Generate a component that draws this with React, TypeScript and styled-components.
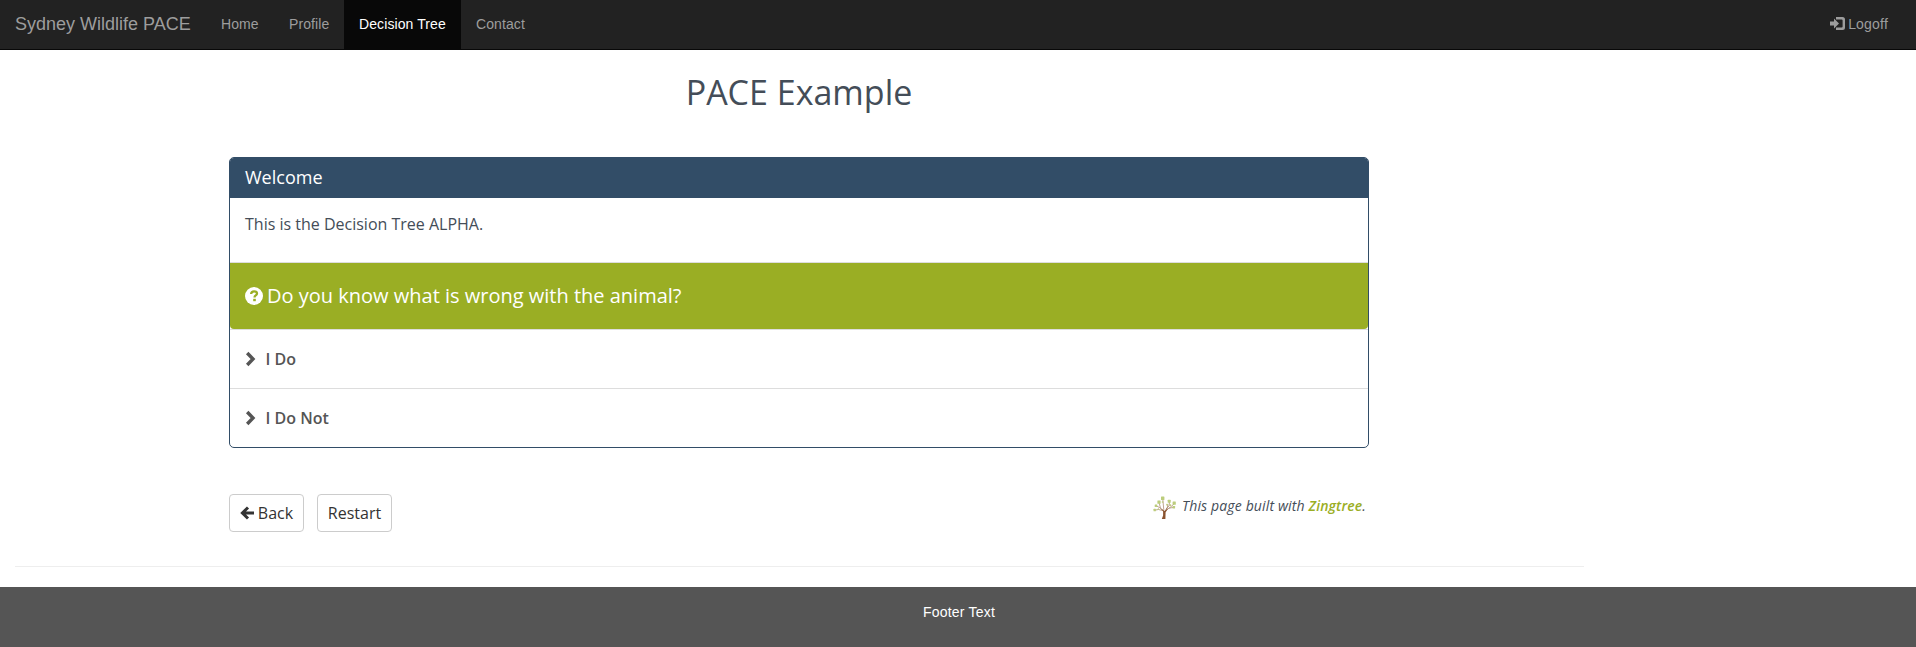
import React from "react";
import styled, { createGlobalStyle } from "styled-components";

const GlobalStyle = createGlobalStyle`
  * { box-sizing: border-box; }
  body {
    margin: 0;
    background: #fff;
    color: #444d58;
    font-family: "Open Sans", sans-serif;
    font-size: 16px;
    overflow-x: hidden;
  }
  h1, h3, p { margin: 0; font-weight: 400; }
`;

const Page = styled.div`
  min-height: 647px;
  display: flex;
  flex-direction: column;
`;

const NavBar = styled.nav`
  display: flex;
  height: 50px;
  background: #222;
  border-bottom: 1px solid #080808;
  font-family: "Liberation Sans", Arial, sans-serif;
  font-size: 14px;
  line-height: 20px;
  color: #9d9d9d;
`;

const Brand = styled.a`
  padding: 14px 15px;
  font-size: 18px;
  width: 206px;
  white-space: nowrap;
`;

const NavLink = styled.a<{ $active?: boolean; $width?: number }>`
  display: flex;
  padding: 14px 0 15px 15px;
  width: ${(p) => (p.$width ? `${p.$width}px` : "auto")};
  white-space: nowrap;
  letter-spacing: 0.1px;
  color: ${(p) => (p.$active ? "#fff" : "#9d9d9d")};
  background: ${(p) => (p.$active ? "#080808" : "transparent")};
`;

const Logoff = styled.a`
  display: flex;
  gap: 3px;
  margin-left: auto;
  padding: 14px 28px 15px 0;
  letter-spacing: 0.2px;
  svg { margin-top: 3px; }
`;

const Main = styled.main`
  width: 1140px;
  margin-left: 229px;
  height: 516px;
`;

const Title = styled.h1`
  height: 107px;
  padding-top: 18px;
  font-size: 34px;
  line-height: 48px;
  text-align: center;
`;

const Panel = styled.section`
  height: 291px;
  border: 1px solid #324d67;
  border-radius: 5px;
  overflow: hidden;
`;

const PanelHeading = styled.h3`
  height: 40px;
  padding: 7px 15px;
  background: #324d67;
  color: #fff;
  font-size: 18px;
  line-height: 24px;
`;

const PanelBody = styled.p`
  height: 64px;
  padding: 14px 15px;
  line-height: 24px;
`;

const Question = styled.div`
  display: flex;
  align-items: center;
  gap: 4px;
  height: 67px;
  padding: 0 15px 1px;
  border-top: 1px solid #ddd;
  border-radius: 0 0 4px 4px;
  background: #9aae24;
  color: #fff;
  font-size: 20px;
  line-height: 27px;
`;

const Answer = styled.a`
  display: flex;
  align-items: center;
  gap: 9.5px;
  height: 59px;
  padding: 0 15px;
  border-top: 1px solid #ddd;
  color: #555;
  font-weight: 600;
`;

const Actions = styled.div`
  display: flex;
  margin-top: 46px;
  gap: 13px;
`;

const Button = styled.button`
  display: flex;
  align-items: center;
  justify-content: center;
  gap: 4px;
  width: 75px;
  height: 38px;
  padding: 0;
  border: 1px solid #ccc;
  border-radius: 4px;
  background: #fff;
  color: #333;
  font: 16px "Open Sans", sans-serif;
`;

const Credit = styled.div`
  display: flex;
  gap: 5px;
  margin-left: auto;
  padding-right: 3px;
  font-size: 14px;
  font-style: italic;
  line-height: 24px;
  letter-spacing: 0.14px;
  white-space: nowrap;
  svg { margin-top: 2px; }
  b { color: #9aae24; font-weight: 600; }
`;

const Rule = styled.hr`
  width: 1569px;
  margin: 0 0 20px 15px;
  border: 0;
  border-top: 1px solid #eee;
`;

const Footer = styled.footer`
  height: 60px;
  padding: 15px 0 0 2px;
  background: #555;
  color: #fff;
  font: 14px/20px "Liberation Sans", Arial, sans-serif;
  letter-spacing: 0.2px;
  text-align: center;
`;

const LoginIcon = () => (
  <svg width="15" height="13" viewBox="0 0 15 13" fill="currentColor">
    <path d="M0 4.5h4V1.6l5 4.9-5 4.9V8.5H0zM6 0h6.5A2.5 2.5 0 0 1 15 2.5v8a2.5 2.5 0 0 1-2.5 2.5H6v-2.4h5.6a1 1 0 0 0 1-1V3.4a1 1 0 0 0-1-1H6z" />
  </svg>
);

const QuestionIcon = () => (
  <svg width="18" height="18" viewBox="0 0 18 18">
    <circle cx="9" cy="9" r="9" fill="#fff" />
    <path d="M6.1 7C6.2 5 7.3 4.3 9.1 4.3c1.8 0 2.9.8 2.9 2.2 0 2-2.5 1.9-2.5 3.9" fill="none" stroke="#9aae24" strokeWidth="2.3" />
    <rect x="8.2" y="11.8" width="2.6" height="2.4" fill="#9aae24" />
  </svg>
);

const ChevronIcon = () => (
  <svg width="11" height="16" viewBox="0 0 11 16">
    <path d="M2.2 2l5.8 6-5.8 6" fill="none" stroke="currentColor" strokeWidth="3.4" />
  </svg>
);

const ArrowIcon = () => (
  <svg width="14" height="14" viewBox="0 0 14 14" fill="none" stroke="currentColor">
    <path d="M8 1.5L2.4 7 8 12.5M2.5 7H14" strokeWidth="3" />
  </svg>
);

const leaves: [number, number, number][] = [
  [9.7, 2.3, 3.4], [6, 6.2, 3.2], [16.2, 5.3, 3], [21.2, 7.2, 3.2], [3, 9.8, 2.6],
  [20.8, 11.2, 2.6], [1.7, 14, 2.4], [14, 8.6, 1.6], [17.3, 9.2, 1.8], [9.6, 6, 1.6], [5.4, 13, 1.4],
];

const TreeIcon = () => (
  <svg width="24" height="24" viewBox="0 0 24 24">
    <path
      d="M11 15L6.5 11.5 3.5 10M7.5 12.2L6.2 7M10.8 14L9.8 3M12 15l2.5-4 .2-3M13 13l3-3 .5-4M13 14l4-2.5 4-3.5M16 12.2l4.5-.8M9.5 14.5l-4-1-3.5.6"
      fill="none" stroke="#a37e62" strokeWidth=".7"
    />
    <path d="M7.3 12l4.1 3 4.2-3-3 4.2L12.4 23H8.8l1.3-3.4v-4.1z" fill="#8a532f" />
    {leaves.map(([x, y, s]) => (
      <rect key={`${x}-${y}`} x={x - s / 2} y={y - s / 2} width={s} height={s} rx=".5" fill="#bccd7c" />
    ))}
  </svg>
);

export default function App() {
  return (
    <Page>
      <GlobalStyle />
      <NavBar>
        <Brand>Sydney Wildlife PACE</Brand>
        <NavLink $width={68}>Home</NavLink>
        <NavLink $width={70}>Profile</NavLink>
        <NavLink $active $width={117}>Decision Tree</NavLink>
        <NavLink>Contact</NavLink>
        <Logoff><LoginIcon />Logoff</Logoff>
      </NavBar>
      <Main>
        <Title>PACE Example</Title>
        <Panel>
          <PanelHeading>Welcome</PanelHeading>
          <PanelBody>This is the Decision Tree ALPHA.</PanelBody>
          <Question>
            <QuestionIcon />
            <span>Do you know what is wrong with the animal?</span>
          </Question>
          <Answer><ChevronIcon />I Do</Answer>
          <Answer><ChevronIcon />I Do Not</Answer>
        </Panel>
        <Actions>
          <Button><ArrowIcon />Back</Button>
          <Button>Restart</Button>
          <Credit><TreeIcon /><span>This page built with <b>Zingtree</b>.</span></Credit>
        </Actions>
      </Main>
      <Rule />
      <Footer>Footer Text</Footer>
    </Page>
  );
}
